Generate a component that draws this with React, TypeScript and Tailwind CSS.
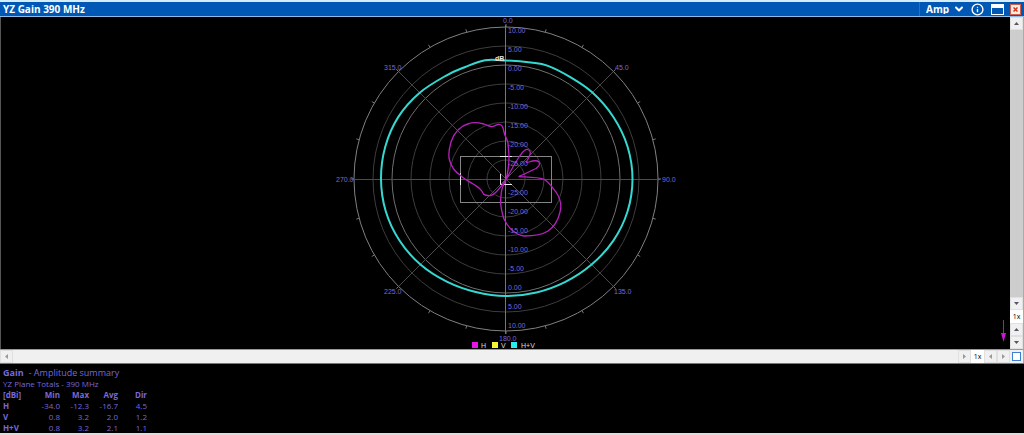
import type { ReactNode } from "react";
import { ChevronDown, Info } from "lucide-react";

const CX = 506;
const CY = 179;
const RING_STEP = 19;
const RINGS = 8;
const OUTER = RING_STEP * RINGS;

interface GainRow {
  name: string;
  values: string[];
}

const ROWS: GainRow[] = [
  { name: "H", values: ["-34.0", "-12.3", "-16.7", "4.5"] },
  { name: "V", values: ["0.8", "3.2", "2.0", "1.2"] },
  { name: "H+V", values: ["0.8", "3.2", "2.1", "1.1"] },
];

const RING_LABELS = ["-25.00", "-20.00", "-15.00", "-10.00", "-5.00", "0.00", "5.00", "10.00"];

// Angle captions around the outer ring
const ANGLES = [
  { text: "0.0", x: 503, y: 23 },
  { text: "45.0", x: 615, y: 70 },
  { text: "90.0", x: 662, y: 182 },
  { text: "135.0", x: 614, y: 294 },
  { text: "180.0", x: 499, y: 341 },
  { text: "225.0", x: 384, y: 294 },
  { text: "270.0", x: 336, y: 182 },
  { text: "315.0", x: 384, y: 70 },
];

const H_TRACE =
  "M506 180 C508 172 509 165 509 158 C509 151 508 146 508 143 C507 138 505 137 504 132 C503 127 502 124 498 124.500 C495 125 494 127 491 126.500 C488 126 487 125 484 124 C480 123 473 122 469 123.500 C460 126 454 133 451 142 C449 149 448 155 449.500 160 C451 166 454 171 460 175 C466 181 475 184 480 189 C483 191 482 194 485 195 C490 196 492 196 495 193 C499 190 501 186 506 180 C510 172 515 163 519 157 C522 153 524 149 528 149.500 C532 151 530 155 528 159 C526 162 526 163 529 162 C532 161 537 160 539 162 C541 165 538 167 536 168.500 L519 176.500 C527 177 538 177 543.500 179 C549 182 552 187 556 192 C560 198 562 205 560 212 C558 221 554 227 548 231 C542 235 533 236 524 236 C516 235 508 228 504 219 C501 210 500 202 501 196 C501 190 503 185 506 180";

// [angle, radius] samples of the H+V total
const HV_SAMPLES: [number, number][] = [
  [0, 118.5], [12, 119], [20, 120.7], [32, 120.5], [45, 122.3], [60, 124], [75, 125.8],
  [90, 126.5], [105, 125.8], [120, 123.8], [135, 121], [150, 118.8], [165, 117.5],
  [180, 117], [195, 117], [210, 118.5], [225, 121], [240, 123], [255, 124.5],
  [270, 125], [285, 125], [300, 124.3], [315, 122], [330, 119.5], [340, 119.2], [350, 120.6],
];

function toXY(angle: number, radius: number) {
  const rad = (angle * Math.PI) / 180;
  return { x: CX + radius * Math.sin(rad), y: CY - radius * Math.cos(rad) };
}

// Closed smooth curve through polar samples
function smoothPath(samples: [number, number][]) {
  const pts = samples.map(([a, r]) => toXY(a, r));
  const at = (i: number) => pts[(i + pts.length) % pts.length];
  const curves = pts.map((p, i) => {
    const prev = at(i - 1);
    const next = at(i + 1);
    const after = at(i + 2);
    return `C${p.x + (next.x - prev.x) / 6} ${p.y + (next.y - prev.y) / 6} ${next.x - (after.x - p.x) / 6} ${next.y - (after.y - p.y) / 6} ${next.x} ${next.y}`;
  });
  return `M${pts[0].x} ${pts[0].y} ${curves.join(" ")} Z`;
}

function PolarGrid() {
  const ticks = Array.from({ length: 24 }, (_, i) => i * 15);

  return (
    <g fill="none">
      {Array.from({ length: RINGS }, (_, i) => i + 1).map((n) => (
        <circle
          key={n}
          cx={CX}
          cy={CY}
          r={n * RING_STEP}
          stroke={n === 8 ? "#808080" : n === 6 ? "#707070" : "#3d3d3d"}
        />
      ))}
      {[45, 135, 225, 315].map((a) => {
        const p = toXY(a, OUTER);
        return <line key={a} x1={CX} y1={CY} x2={p.x} y2={p.y} stroke="#4a4a4a" />;
      })}
      <path d="M354 179.500 H660" stroke="#4c4c4c" />
      <path d="M505.500 25 V334" stroke="#777" />
      {ticks.map((a) => {
        const from = toXY(a, OUTER);
        const to = toXY(a, OUTER + 3);
        return <line key={a} x1={from.x} y1={from.y} x2={to.x} y2={to.y} stroke="#777" />;
      })}
    </g>
  );
}

function PolarChart() {
  return (
    <svg
      className="h-[332px] w-[360px] shrink-0"
      viewBox="326 17 360 332"
      role="img"
      aria-label="YZ Gain"
      fontFamily="'Liberation Sans', sans-serif"
      fontSize="7"
    >
      <PolarGrid />

      {/* selection frame and its handles */}
      <rect x="460.500" y="156.500" width="91" height="46" fill="none" stroke="#858585" />
      <path d="M460.500 173 V185 M500 156.500 H512 M500.500 174 V184.500 H512" fill="none" stroke="#e8e8e8" />

      <path d={H_TRACE} fill="none" stroke="#b820be" strokeWidth="1.300" strokeLinejoin="round" />
      <path d={smoothPath(HV_SAMPLES)} fill="none" stroke="#35d9d2" strokeWidth="2" />

      <g fill="#7868dc">
        {RING_LABELS.map((label, i) => (
          <g key={label}>
            <text x="508" y={166 - i * RING_STEP}>{label}</text>
            <text x="508" y={195 + i * RING_STEP}>{label}</text>
          </g>
        ))}
        {ANGLES.map((a) => (
          <text key={a.text} x={a.x} y={a.y}>{a.text}</text>
        ))}
      </g>
      <text x="495" y="61" fill="#e5e5e5" fontWeight="bold">dB</text>

      <g fill="#ddd">
        <rect x="472" y="342" width="6" height="6" fill="#e815e8" />
        <text x="481" y="348">H</text>
        <rect x="492" y="342" width="6" height="6" fill="#f5f531" />
        <text x="501" y="348">V</text>
        <rect x="511" y="342" width="6" height="6" fill="#25f0f0" />
        <text x="521" y="348">H+V</text>
      </g>
    </svg>
  );
}

type Direction = "up" | "down" | "left" | "right";

const ARROWS: Record<Direction, string> = {
  up: "M1 5 L3.500 2 L6 5 Z",
  down: "M1 2 L3.500 5 L6 2 Z",
  left: "M5 1 L2 3.500 L5 6 Z",
  right: "M2 1 L5 3.500 L2 6 Z",
};

function ArrowButton({ dir, label, muted }: { dir: Direction; label: string; muted?: boolean }) {
  return (
    <button
      type="button"
      aria-label={label}
      className="flex size-[13px] shrink-0 items-center justify-center border border-[#e0e0e0] bg-[#f0f0f0]"
    >
      <svg className="size-[7px]" viewBox="0 0 7 7">
        <path d={ARROWS[dir]} fill={muted ? "#999" : "#555568"} />
      </svg>
    </button>
  );
}

function ZoomLabel({ children }: { children: ReactNode }) {
  return (
    <span className="flex size-[13px] shrink-0 items-center justify-center bg-white text-[7px] leading-none text-black">
      {children}
    </span>
  );
}

function TitleBar() {
  return (
    <header className="flex h-[17px] items-center border-t-2 border-b border-t-[#d5edfa] border-b-[#8fbce6] bg-[#0058b4] px-[3px] text-white">
      <h1 className="flex-1 text-[10px] leading-none font-bold">YZ Gain 390 MHz</h1>
      <div className="relative flex h-[14px] w-[48px] items-center border-l border-[#2770bf]">
        <select
          aria-label="Display"
          className="w-full appearance-none bg-transparent pl-[6px] text-[10px] leading-none font-bold"
        >
          <option>Amp</option>
        </select>
        <ChevronDown className="pointer-events-none absolute right-[2px] size-[12px]" strokeWidth={4} />
      </div>
      <button type="button" aria-label="Information" className="ml-[4px]">
        <Info className="size-[13px]" strokeWidth={2.5} />
      </button>
      <button type="button" aria-label="Maximize" className="ml-[7px]">
        <svg className="h-[11px] w-[13px]" viewBox="0 0 13 11">
          <rect x="0.500" y="0.500" width="12" height="10" fill="none" stroke="#fff" />
          <rect width="13" height="4" fill="#fff" />
        </svg>
      </button>
      <button
        type="button"
        aria-label="Close"
        className="ml-[6px] flex size-[11px] items-center justify-center border border-[#d0604c] bg-[#fbe9e4]"
      >
        <svg className="size-[5px]" viewBox="0 0 5 5">
          <path d="M0.500 0.500 L4.500 4.500 M4.500 0.500 L0.500 4.500" stroke="#c83a20" strokeWidth="1.500" />
        </svg>
      </button>
    </header>
  );
}

function Summary() {
  return (
    <section className="border-t border-b-2 border-t-[#777] border-b-[#ddd] bg-black pt-[3px] pl-[3px] text-[#7868d8]">
      <h2 className="text-[9px] leading-[12px]">
        <strong className="mr-[5px]">Gain</strong>- Amplitude summary
      </h2>
      <p className="text-[8px] leading-[10px]">YZ Plane Totals - 390 MHz</p>
      <table className="w-[144px] table-fixed text-right text-[8px] leading-[11px]">
        <thead>
          <tr>
            <th className="w-[28px] text-left">[dBi]</th>
            <th>Min</th>
            <th>Max</th>
            <th>Avg</th>
            <th>Dir</th>
          </tr>
        </thead>
        <tbody>
          {ROWS.map((row) => (
            <tr key={row.name}>
              <th className="text-left">{row.name}</th>
              {row.values.map((value, i) => (
                <td key={i}>{value}</td>
              ))}
            </tr>
          ))}
        </tbody>
      </table>
    </section>
  );
}

export default function App() {
  return (
    <div className="flex min-h-screen flex-col bg-black font-['Open_Sans',sans-serif]">
      <TitleBar />

      <main className="flex flex-1 border-r border-[#aaa]">
        <div className="relative flex flex-1 justify-center border-l border-[#555]">
          <PolarChart />
          <svg className="absolute right-[3px] bottom-[7px] h-[22px] w-[7px]" viewBox="0 0 7 22">
            <path d="M3.500 0 V14" stroke="#b010b8" />
            <path d="M1 13 H6 L3.500 22 Z" fill="#c81ad0" />
          </svg>
        </div>
        <div className="flex w-[13px] flex-col bg-[#cdcdcd]">
          <ArrowButton dir="up" label="Scroll up" />
          <div className="flex-1" />
          <ArrowButton dir="down" label="Scroll down" />
          <ZoomLabel>1x</ZoomLabel>
          <ArrowButton dir="up" label="Increase vertical zoom" />
          <ArrowButton dir="down" label="Decrease vertical zoom" />
        </div>
      </main>

      <div className="flex h-[14px] items-center border-t border-r border-t-[#999] border-r-[#aaa] bg-[#f0f0f0]">
        <ArrowButton dir="left" label="Scroll left" muted />
        <div className="flex-1" />
        <ArrowButton dir="right" label="Scroll right" muted />
        <ZoomLabel>1x</ZoomLabel>
        <ArrowButton dir="left" label="Decrease horizontal zoom" muted />
        <ArrowButton dir="right" label="Increase horizontal zoom" muted />
        <button
          type="button"
          aria-label="Fit to window"
          className="m-[2px] size-[9px] shrink-0 border border-[#3f7fd0] bg-white"
        />
      </div>

      <Summary />
    </div>
  );
}
